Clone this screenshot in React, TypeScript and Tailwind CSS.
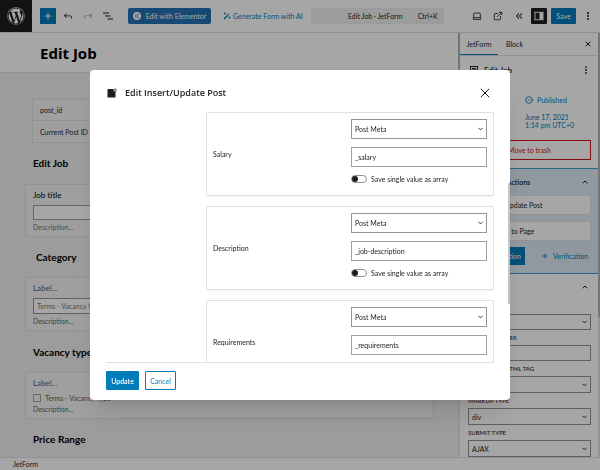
import React from "react";
import {
  ChevronDown,
  ChevronUp,
  ChevronsLeft,
  CircleCheck,
  EllipsisVertical,
  ExternalLink,
  Laptop,
  Plus,
  X,
} from "lucide-react";
import { FaWordpress } from "react-icons/fa";

type FieldSelectProps = {
  id?: string;
  label: string;
  value: string;
  className?: string;
};

const FieldSelect: React.FC<FieldSelectProps> = ({ id, label, value, className = "" }) => (
  <div className="relative">
    <select
      id={id}
      aria-label={label}
      className={`block w-full appearance-none border border-[#949494] bg-white px-[3px] text-[#1e1e1e] ${className}`}
    >
      <option>{value}</option>
    </select>
    <ChevronDown className="pointer-events-none absolute right-[3px] top-1/2 size-[7px] -translate-y-1/2" strokeWidth={3} />
  </div>
);

const Header = () => (
  <header className="flex h-[33px] shrink-0 items-center border-b border-[#e0e0e0] bg-white pr-[7px]">
    <a href="#" aria-label="View forms" className="flex h-8 w-8 shrink-0 items-center justify-center self-start bg-[#1e1e1e] text-white">
      <FaWordpress className="size-[18px]" />
    </a>
    <button aria-label="Add block" className="ml-2 flex size-4 shrink-0 items-center justify-center bg-[#007cba] text-white">
      <Plus className="size-2.5" strokeWidth={2.5} />
    </button>
    <button aria-label="Undo" className="ml-1.5 shrink-0">
      <svg viewBox="0 0 24 24" className="size-3" fill="currentColor">
        <path d="M18.3 11.7c-.6-.6-1.400-.9-2.300-.9H6.700l2.900-3.300-1.100-1-4.500 5L8.500 16l1-1-2.700-2.700H16c.5 0 .9.200 1.300.5 1 1 1 3.400 1 4.500v.3h1.500v-.2c0-1.500 0-4.300-1.500-5.700z" />
      </svg>
    </button>
    <button aria-label="Redo" className="ml-2 shrink-0 text-[#949494]">
      <svg viewBox="0 0 24 24" className="size-3" fill="currentColor">
        <path d="M15.600 6.500l-1.100 1 2.900 3.300H8c-.9 0-1.700.3-2.300.9-1.400 1.500-1.400 4.200-1.400 5.600v.2h1.500v-.3c0-1.100 0-3.500 1-4.500.3-.3.7-.5 1.300-.5h9.200L14.500 15l1.100 1.100 4.600-4.600-4.600-5z" />
      </svg>
    </button>
    <button aria-label="Document overview" className="ml-2 shrink-0">
      <svg viewBox="0 0 24 24" className="size-3" fill="currentColor">
        <path d="M2 5h12v2H2zM6 11h11v2H6zM11 17h11v2H11z" />
      </svg>
    </button>
    <button className="ml-[14px] flex h-4 w-[83px] shrink-0 items-center justify-center gap-[5px] rounded-[2px] bg-[#2271b1] whitespace-nowrap text-white">
      <svg viewBox="0 0 16 16" className="size-2">
        <circle cx="8" cy="8" r="8" fill="white" />
        <path d="M5 4.500h1.800v7H5zM8 4.500h3.500v1.400H8zM8 7.300h3.500v1.400H8zM8 10.100h3.500v1.400H8z" fill="#2271b1" />
      </svg>
      Edit with Elementor
    </button>
    <button className="ml-3 flex shrink-0 items-center gap-[2px] whitespace-nowrap text-[#007cba]">
      <svg viewBox="0 0 16 16" className="size-2" fill="currentColor">
        <path d="M1 13 9 5l2 2-8 8zM10 4l1.500-1.500 2 2L12 6zM4 0l1 2 2 1-2 1-1 2-1-2-2-1 2-1zM13 8l1 2 2 1-2 1-1 2-1-2-2-1 2-1z" />
      </svg>
      Generate Form with AI
    </button>
    <button className="ml-2 flex h-4 w-[133px] items-center rounded-[2px] bg-[#f0f0f0] px-1.5 whitespace-nowrap">
      <span className="flex-1 pl-4 text-center">Edit Job · JetForm</span>
      <span>Ctrl+K</span>
    </button>
    <div className="ml-auto flex shrink-0 items-center">
      <button aria-label="View" className="mr-[11px]"><Laptop className="size-2.5" strokeWidth={2} /></button>
      <button aria-label="Open in new tab" className="mr-[11px]"><ExternalLink className="size-2.5" strokeWidth={2} /></button>
      <button aria-label="Collapse" className="mr-[7px]"><ChevronsLeft className="size-2.5" strokeWidth={2.5} /></button>
      <button aria-label="Settings" className="mr-1 flex size-4 items-center justify-center rounded-[1px] bg-[#1e1e1e] text-white">
        <svg viewBox="0 0 16 16" className="size-2.5" fill="none" stroke="currentColor" strokeWidth="1.500">
          <rect x="1.500" y="2" width="13" height="12" />
          <path d="M9.500 3h4v10h-4z" fill="currentColor" />
        </svg>
      </button>
      <button className="h-4 w-[25px] rounded-[1px] bg-[#007cba] text-white">Save</button>
      <button aria-label="Options" className="ml-[7px]"><EllipsisVertical className="size-2.5" strokeWidth={3} /></button>
    </div>
  </header>
);

const card = "ml-[25px] mr-6 border border-[#e0e0e0] bg-[#f5f5f5] px-[7px]";
const heading = "text-[10px] leading-4 font-bold text-black";

const Canvas = () => (
  <main className="min-w-0 flex-1 overflow-hidden bg-[#f0f0f0]">
    <h1 className="flex h-10 items-center border-b border-[#e0e0e0] bg-white pl-10 font-['Open_Sans','Noto_Sans',sans-serif] text-[15px] font-bold text-black">
      Edit Job
    </h1>

    <div className="mx-8 mt-[26px] border border-[#e0e0e0] bg-[#f5f5f5]">
      <p className="flex h-[21px] items-center border-b border-[#e0e0e0] px-[7px]">post_id</p>
      <p className="flex h-[21px] items-center px-[7px]">Current Post ID</p>
    </div>

    <h2 className={`ml-[33px] mt-3 ${heading}`}>Edit Job</h2>
    <div className={`${card} mt-[13px] h-[53px] pt-1`}>
      <label htmlFor="job-title" className="block text-[8px] leading-3 font-semibold">Job title</label>
      <input id="job-title" className="mt-1 block h-[15px] w-full border border-[#a0a0a0] bg-white" />
      <p className="mt-0.5 text-[#757575]">Description...</p>
    </div>

    <h2 className={`ml-9 mt-3 ${heading}`}>Category</h2>
    <div className={`${card} mt-3 h-[54px] pt-1`}>
      <label htmlFor="category" className="block text-[8px] leading-3 text-[#606060]">Label...</label>
      <select id="category" className="mt-1 block h-4 w-full appearance-none border border-[#949494] bg-white px-[3px] text-[#757575]">
        <option>Terms - Vacancy Category</option>
      </select>
      <p className="mt-0.5 text-[#606060]">Description...</p>
    </div>

    <h2 className={`ml-[33px] mt-[13px] ${heading}`}>Vacancy type</h2>
    <div className={`${card} mt-3 h-[47px] pt-1`}>
      <p className="text-[8px] leading-3 text-[#606060]">Label...</p>
      <label className="mt-1 flex h-2.5 items-center gap-1 text-[#606060]">
        <input type="checkbox" className="size-2 appearance-none border border-[#a0a0a0]" />
        Terms - Vacancy Type
      </label>
      <p className="mt-px text-[#606060]">Description...</p>
    </div>

    <h2 className={`ml-[33px] mt-3 ${heading}`}>Price Range</h2>
  </main>
);

const sectionLabel = "block h-[15px] text-[6px] leading-4 font-medium";

const Sidebar = () => (
  <aside className="w-[138px] shrink-0 overflow-hidden bg-white">
    <div className="flex h-[23px] items-stretch border-b border-[#e0e0e0]">
      <button className="w-[38px] border-b border-[#007cba]">JetForm</button>
      <button className="ml-2">Block</button>
      <button aria-label="Close settings" className="ml-auto mr-1.5"><X className="size-2" strokeWidth={3} /></button>
    </div>

    <div className="pr-[7px] pl-2">
      <div className="mt-2 flex h-3 items-center">
        <svg viewBox="0 0 16 16" className="ml-0.5 size-2" fill="none" stroke="currentColor" strokeWidth="2">
          <rect x="1" y="1" width="14" height="14" />
          <path d="M4 5h8M4 8h8M4 11h8" />
        </svg>
        <span className="ml-1.5 text-[8px] font-semibold">Edit Job</span>
        <button aria-label="Form actions" className="ml-auto"><EllipsisVertical className="size-2.5" strokeWidth={2.5} /></button>
      </div>
      <dl className="mt-[19px] grid grid-cols-[57px_1fr]">
        <dt>Status</dt>
        <dd className="flex items-center gap-1 text-[#007cba]"><CircleCheck className="size-2" strokeWidth={2.5} />Published</dd>
        <dt className="mt-2">Publish</dt>
        <dd className="mt-2 leading-[8px] text-[#007cba]">June 17, 2021<br />1:14 pm UTC+0</dd>
      </dl>
      <button className="mt-[11px] block h-5 w-full border border-[#cc1818] text-[#cc1818]">Move to trash</button>
    </div>

    <section className="mt-2 h-[106px] border-y border-[#3a9fd0] bg-[#deebf5] pr-[7px] pl-2">
      <div className="flex h-[26px] items-center justify-between font-semibold">
        Post Submit Actions
        <ChevronUp className="mr-0.5 size-2" strokeWidth={3} />
      </div>
      <div className="flex h-5 items-center border border-[#e0e0e0] bg-white px-[15px]">Insert/Update Post</div>
      <div className="mt-1.5 flex h-5 items-center border border-[#e0e0e0] bg-white px-[15px]">Redirect to Page</div>
      <div className="mt-1.5 flex h-[18px] items-center">
        <button className="h-full w-[57px] bg-[#007cba] pr-1 text-right text-white">+ New Action</button>
        <button className="ml-4 flex items-center gap-1 text-[#007cba]"><Plus className="size-2" strokeWidth={2.5} />Verification</button>
      </div>
    </section>

    <section className="pr-[7px] pl-2">
      <div className="flex h-[25px] items-center justify-between font-semibold">
        Settings
        <ChevronUp className="mr-0.5 size-2" strokeWidth={3} />
      </div>
      <label htmlFor="layout" className="mt-[3px] block h-3 text-[6px] leading-[10px]">LAYOUT</label>
      <FieldSelect id="layout" label="Fields layout" value="Column" className="h-4" />
      <label htmlFor="mark" className={sectionLabel}>REQUIRED MARK</label>
      <input id="mark" defaultValue="*" className="block h-4 w-full border border-[#949494] px-[3px]" />
      <label htmlFor="tag" className={sectionLabel}>FIELD LABEL HTML TAG</label>
      <FieldSelect id="tag" label="Field label HTML tag" value="div" className="h-[17px]" />
      <label htmlFor="markup" className={sectionLabel}>MARKUP TYPE</label>
      <FieldSelect id="markup" label="Markup type" value="div" className="h-[17px]" />
      <label htmlFor="submit" className={sectionLabel}>SUBMIT TYPE</label>
      <FieldSelect id="submit" label="Submit type" value="AJAX" className="h-[17px]" />
    </section>
  </aside>
);

const ScrollTrack = () => (
  <div className="w-0.5 shrink-0 bg-[#e4e4e4]">
    <div className="h-[67%] bg-[#b4b4b4]" />
  </div>
);

const fields = [
  { label: "Salary", value: "_salary", hasSwitch: true },
  { label: "Description", value: "_job-description", hasSwitch: true },
  { label: "Requirements", value: "_requirements", hasSwitch: false },
];

const MetaField: React.FC<(typeof fields)[number]> = ({ label, value, hasSwitch }) => (
  <div className="flex h-[84px] shrink-0 rounded-[1px] border border-[#e0e0e0] px-1.5 shadow-xs">
    <label htmlFor={value} className="flex-1 self-center">{label}</label>
    <div className="w-[136px] pt-1.5">
      <FieldSelect label={`${label} type`} value="Post Meta" className="h-5" />
      <input id={value} defaultValue={value} className="mt-2 block h-5 w-full border border-[#a0a0a0] px-[3px]" />
      {hasSwitch && (
        <label className="mt-[7px] flex h-[9px] items-center gap-1">
          <input
            type="checkbox"
            className="flex h-2 w-4 appearance-none items-center rounded-full border border-[#949494] before:block before:size-1.5 before:rounded-full before:bg-[#1e1e1e] before:content-['']"
          />
          Save single value as array
        </label>
      )}
    </div>
  </div>
);

const EditActionModal = () => (
  <div className="fixed inset-0 flex items-center justify-center bg-black/35">
    <div role="dialog" aria-labelledby="modal-title" className="relative flex h-[330px] w-[70%] min-w-[400px] flex-col rounded-[4px] bg-white px-4 shadow-xl">
      <div className="flex h-[42px] shrink-0 items-center pt-1">
        <svg viewBox="0 0 20 20" className="ml-px size-2.5" fill="currentColor">
          <path d="M1 2h12v5h4v12H1z" />
          <circle cx="16" cy="4.500" r="2.500" fill="none" stroke="currentColor" strokeWidth="1.500" />
        </svg>
        <h2 id="modal-title" className="ml-2 font-['Open_Sans','Noto_Sans',sans-serif] text-[9px] font-semibold">Edit Insert/Update Post</h2>
        <button aria-label="Close" className="ml-auto mr-px"><X className="size-4" strokeWidth={1.5} /></button>
      </div>
      <div className="ml-[100px] flex min-h-0 flex-1 flex-col gap-2.5 overflow-hidden">
        {fields.map((field) => (
          <MetaField key={field.value} {...field} />
        ))}
      </div>
      <div className="flex h-[38px] shrink-0 items-center gap-1.5 border-t border-[#e0e0e0] pb-0.5">
        <button className="h-[19px] w-[33px] rounded-[1px] bg-[#007cba] font-semibold text-white">Update</button>
        <button className="h-[19px] w-[31px] rounded-[1px] border border-[#007cba] text-[#007cba]">Cancel</button>
      </div>
      {/* scroll thumb */}
      <div className="absolute right-0 top-[113px] h-[121px] w-0.5 bg-[#c4c4c4]" />
    </div>
  </div>
);

export default function App() {
  return (
    <div className="flex h-screen flex-col overflow-hidden font-['Lato','Open_Sans',sans-serif] text-[7px] leading-[10px] text-[#1e1e1e]">
      <Header />
      <div className="flex min-h-0 flex-1">
        <Canvas />
        <ScrollTrack />
        <Sidebar />
        <ScrollTrack />
      </div>
      <footer className="flex h-[13px] shrink-0 items-center border-t border-[#e0e0e0] bg-white pl-[13px]">JetForm</footer>
      <EditActionModal />
    </div>
  );
}
